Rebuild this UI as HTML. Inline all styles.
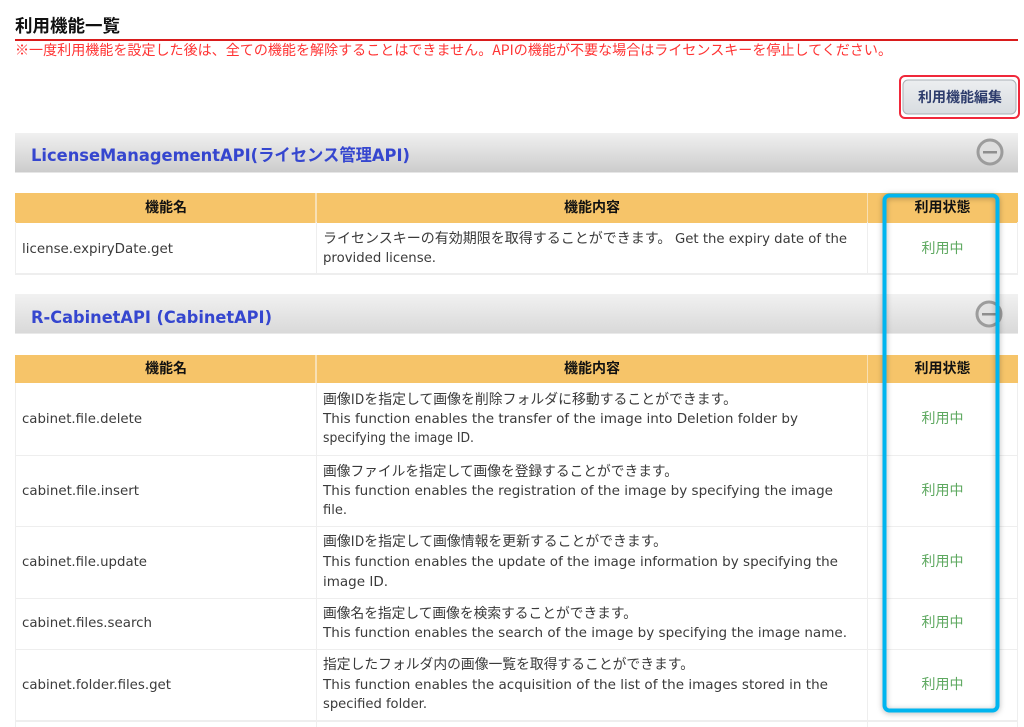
<!DOCTYPE html>
<html lang="ja"><head><meta charset="utf-8"><title>利用機能一覧</title>
<style>
html,body{margin:0;padding:0;background:#fff;width:1024px;height:727px;overflow:hidden}
svg{display:block;filter:blur(.3px)}
text{font-family:"DejaVu Sans","Noto Sans CJK JP",sans-serif;font-size:13.4px;fill:#3a3a3a;white-space:pre}
.j{font-family:"Noto Sans CJK JP","Liberation Sans",sans-serif;font-size:14px}
.h{font-family:"Noto Sans CJK JP",sans-serif;font-size:14px;font-weight:700;fill:#111;text-anchor:middle}
.g{font-family:"Noto Sans CJK JP",sans-serif;font-size:14px;fill:#5da85f;text-anchor:middle}
.b{font-family:"DejaVu Sans","Noto Sans CJK JP",sans-serif;font-size:17px;font-weight:700;fill:#3546cf}
</style></head><body>
<svg width="1024" height="727" viewBox="0 0 1024 727" xmlns="http://www.w3.org/2000/svg">
<defs>
<linearGradient id="bar" x1="0" y1="0" x2="0" y2="1"><stop offset="0" stop-color="#f0f0f0"/><stop offset="1" stop-color="#cbcbcb"/></linearGradient>
<linearGradient id="bar2" x1="0" y1="0" x2="0" y2="1"><stop offset="0" stop-color="#f1f1f1"/><stop offset="1" stop-color="#d8d8d8"/></linearGradient>
<linearGradient id="btn" x1="0" y1="0" x2="0" y2="1"><stop offset="0" stop-color="#eceef0"/><stop offset="1" stop-color="#d8dce0"/></linearGradient>
<filter id="sh" x="-20%" y="-5%" width="140%" height="110%"><feDropShadow dx="0" dy="1" stdDeviation="3" flood-color="#000" flood-opacity=".3"/></filter>
</defs>

<text x="15" y="32" class="j" style="font-size:17.5px;font-weight:700;fill:#111">利用機能一覧</text>
<rect x="15" y="39" width="1003" height="2" fill="#d91c1c"/>
<text x="15" y="55" class="j" style="fill:#f33" textLength="877" lengthAdjust="spacingAndGlyphs">※一度利用機能を設定した後は、全ての機能を解除することはできません。APIの機能が不要な場合はライセンスキーを停止してください。</text>

<rect x="903" y="80" width="113" height="34" rx="5" fill="url(#btn)" stroke="#aab0b6"/>
<rect x="900" y="76" width="119" height="42" rx="5" fill="none" stroke="#f0283a" stroke-width="2"/>
<text x="960" y="102" class="h" style="fill:#2d3c6c">利用機能編集</text>

<!-- bar 1 -->
<rect x="15" y="133" width="1003" height="40" fill="url(#bar)"/>
<rect x="15" y="172" width="1003" height="1" fill="#e6e6e6"/>
<text x="31" y="161" class="b" textLength="379" lengthAdjust="spacingAndGlyphs">LicenseManagementAPI(ライセンス管理API)</text>
<circle cx="990" cy="152" r="12" fill="#dedede" stroke="#9c9c9c" stroke-width="3"/>
<rect x="983" y="151" width="14" height="2.5" fill="#8e8e8e"/>

<!-- table 1 -->
<rect x="15" y="193" width="1003" height="30" fill="#f6c469"/>
<g fill="#f8e0b4"><rect x="315" y="193" width="2" height="30"/><rect x="867" y="193" width="1" height="30"/></g>
<g fill="#eeeeee">
<rect x="15" y="222" width="1" height="53"/><rect x="316" y="222" width="1" height="53"/><rect x="867" y="222" width="1" height="53"/><rect x="1017" y="222" width="1" height="53"/>
<rect x="15" y="273" width="1003" height="2"/>
</g>
<text x="166" y="212" class="h">機能名</text>
<text x="592" y="212" class="h">機能内容</text>
<text x="942.5" y="212" class="h">利用状態</text>
<text x="22" y="253" textLength="151" lengthAdjust="spacingAndGlyphs">license.expiryDate.get</text>
<text x="323" y="243" class="j">ライセンスキーの有効期限を取得することができます。</text>
<text x="675" y="243" textLength="172" lengthAdjust="spacingAndGlyphs">Get the expiry date of the</text>
<text x="323" y="262" textLength="113" lengthAdjust="spacingAndGlyphs">provided license.</text>
<text x="942.5" y="253" class="g">利用中</text>

<!-- bar 2 -->
<rect x="15" y="294" width="1003" height="40" fill="url(#bar2)"/>
<rect x="15" y="333" width="1003" height="1" fill="#e9e9e9"/>
<text x="31" y="323" class="b" textLength="241" lengthAdjust="spacingAndGlyphs">R-CabinetAPI (CabinetAPI)</text>
<circle cx="989" cy="314" r="12" fill="#e2e2e2" stroke="#9c9c9c" stroke-width="3"/>
<rect x="982" y="313" width="14" height="2.5" fill="#8e8e8e"/>

<!-- table 2 -->
<rect x="15" y="355" width="1003" height="28" fill="#f6c469"/>
<g fill="#f8e0b4"><rect x="315" y="355" width="2" height="28"/><rect x="867" y="355" width="1" height="28"/></g>
<g fill="#eeeeee">
<rect x="15" y="383" width="1" height="344"/><rect x="316" y="383" width="1" height="344"/><rect x="867" y="383" width="1" height="344"/><rect x="1017" y="383" width="1" height="344"/>
<rect x="15" y="455" width="1003" height="1"/><rect x="15" y="526" width="1003" height="1"/><rect x="15" y="598" width="1003" height="1"/><rect x="15" y="649" width="1003" height="1"/><rect x="15" y="720" width="1003" height="2"/>
</g>
<text x="166" y="373" class="h">機能名</text>
<text x="592" y="373" class="h">機能内容</text>
<text x="942.5" y="373" class="h">利用状態</text>

<text x="22" y="423" textLength="120" lengthAdjust="spacingAndGlyphs">cabinet.file.delete</text>
<text x="323" y="404" class="j" textLength="414" lengthAdjust="spacingAndGlyphs">画像IDを指定して画像を削除フォルダに移動することができます。</text>
<text x="323" y="423" textLength="475" lengthAdjust="spacingAndGlyphs">This function enables the transfer of the image into Deletion folder by</text>
<text x="323" y="442" textLength="151" lengthAdjust="spacingAndGlyphs" style="font-size:13.6px">specifying the image ID.</text>
<text x="942.5" y="423" class="g">利用中</text>

<text x="22" y="495" textLength="117" lengthAdjust="spacingAndGlyphs">cabinet.file.insert</text>
<text x="323" y="476" class="j" textLength="355" lengthAdjust="spacingAndGlyphs">画像ファイルを指定して画像を登録することができます。</text>
<text x="323" y="495" textLength="510" lengthAdjust="spacingAndGlyphs">This function enables the registration of the image by specifying the image</text>
<text x="323" y="514" textLength="24" lengthAdjust="spacingAndGlyphs">file.</text>
<text x="942.5" y="495" class="g">利用中</text>

<text x="22" y="566" textLength="125" lengthAdjust="spacingAndGlyphs">cabinet.file.update</text>
<text x="323" y="546" class="j" textLength="344" lengthAdjust="spacingAndGlyphs">画像IDを指定して画像情報を更新することができます。</text>
<text x="323" y="566" textLength="515" lengthAdjust="spacingAndGlyphs">This function enables the update of the image information by specifying the</text>
<text x="323" y="586" textLength="65" lengthAdjust="spacingAndGlyphs">image ID.</text>
<text x="942.5" y="566" class="g">利用中</text>

<text x="22" y="627" textLength="130" lengthAdjust="spacingAndGlyphs">cabinet.files.search</text>
<text x="323" y="618" class="j" textLength="314" lengthAdjust="spacingAndGlyphs">画像名を指定して画像を検索することができます。</text>
<text x="323" y="637" textLength="524" lengthAdjust="spacingAndGlyphs">This function enables the search of the image by specifying the image name.</text>
<text x="942.5" y="627" class="g">利用中</text>

<text x="22" y="689" textLength="149" lengthAdjust="spacingAndGlyphs">cabinet.folder.files.get</text>
<text x="323" y="669" class="j" textLength="371" lengthAdjust="spacingAndGlyphs">指定したフォルダ内の画像一覧を取得することができます。</text>
<text x="323" y="689" textLength="505" lengthAdjust="spacingAndGlyphs">This function enables the acquisition of the list of the images stored in the</text>
<text x="323" y="708" textLength="104" lengthAdjust="spacingAndGlyphs">specified folder.</text>
<text x="942.5" y="689" class="g">利用中</text>

<!-- highlight box -->
<rect x="884.5" y="195.5" width="113" height="515" rx="5" fill="none" stroke="#00b5ef" stroke-width="4" filter="url(#sh)"/>
</svg>
</body></html>
